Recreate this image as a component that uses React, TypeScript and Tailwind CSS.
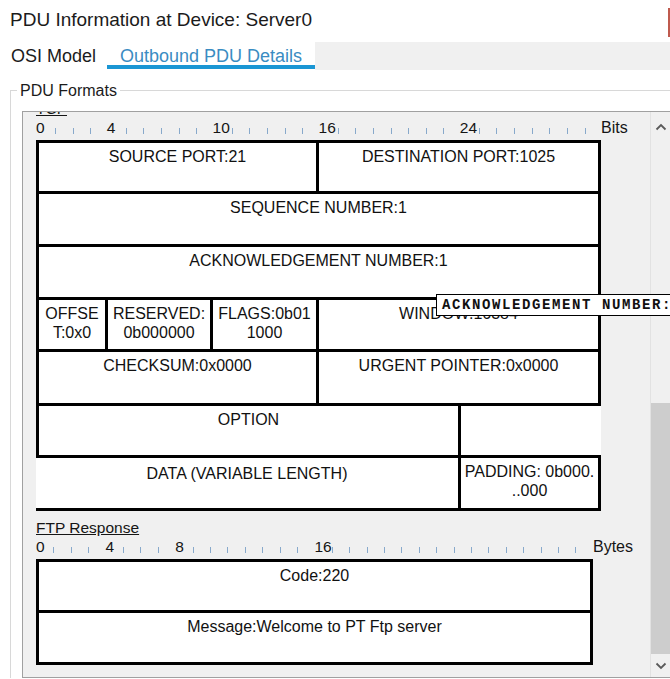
import React from "react";

type RulerProps = {
  unit: number;
  labels: number[];
  count: number;
  end: string;
  endX: number;
  tickOffset: number;
  width: number;
};

function Ruler({ unit, labels, count, end, endX, tickOffset, width }: RulerProps) {
  const ticks = Array.from({ length: count }, (_, i) => i).filter((i) => !labels.includes(i));
  return (
    <div className="relative h-[23px]" style={{ width }}>
      {labels.map((l) => (
        <span
          key={"l" + l}
          className="absolute top-[3px] text-[15.5px] leading-[16px] text-[#151515]"
          style={{ left: l * unit }}
        >
          {l}
        </span>
      ))}
      {ticks.map((t) => (
        <span
          key={"t" + t}
          className="absolute top-[11px] h-[6px] w-px bg-[#88a9cb]"
          style={{ left: t * unit + tickOffset }}
        />
      ))}
      <span
        className="absolute top-[3px] text-[16px] leading-[16px] text-[#151515]"
        style={{ left: endX }}
      >
        {end}
      </span>
    </div>
  );
}

const cell = "bg-white border-black text-center text-[16px] leading-[19px] pt-[4px] text-[#111] overflow-hidden whitespace-nowrap";

function ChevronUp() {
  return (
    <svg width="12" height="8" viewBox="0 0 12 8">
      <polyline points="1.5,6.5 6,2 10.5,6.5" fill="none" stroke="#5a5a5a" strokeWidth="1.8" />
    </svg>
  );
}

function ChevronDown() {
  return (
    <svg width="12" height="8" viewBox="0 0 12 8">
      <polyline points="1.5,1.5 6,6 10.5,1.5" fill="none" stroke="#5a5a5a" strokeWidth="1.8" />
    </svg>
  );
}

export default function App() {
  return (
    <div className="relative w-[670px] h-[679px] overflow-hidden bg-white font-['Liberation_Sans',Arial,sans-serif] text-[#111]">
      {/* title */}
      <div className="h-[42px] pl-[10px] pt-[8px] text-[19px] leading-[24px] text-[#1b1b1b]">
        PDU Information at Device: Server0
      </div>

      {/* tabs */}
      <div className="flex h-[28px]">
        <div className="flex bg-white">
          <div className="w-[107px] pl-[11px] pt-[4px] text-[18px] leading-[20px] text-[#1b1b1b]">OSI Model</div>
          <div className="w-[208px] h-[27px] border-b-[4px] border-[#1a96d4] pl-[13px] pt-[4px] text-[18px] leading-[20px] text-[#3a8cc2]">
            Outbound PDU Details
          </div>
        </div>
        <div className="flex-1 bg-[#f0f0f0]" />
      </div>

      {/* group box */}
      <div className="relative ml-[10px] mt-[20px] border-l border-t border-[#d8d8d8] pl-[11px] pt-[20px]">
        <span className="absolute left-[6px] top-[-9px] bg-white px-[3px] text-[16px] leading-[18px] text-[#1b1b1b]">
          PDU Formats
        </span>

        {/* scroll pane */}
        <div className="flex h-[567px] overflow-hidden border border-r-0 border-[#a0a0a0] bg-[#f0f0f0]">
          <div className="flex-1 overflow-hidden pl-[13px]">
            <div className="-mt-[11px] text-[15.5px] leading-[16px] underline text-[#151515]">TCP</div>
            <Ruler unit={17.66} labels={[0, 4, 10, 16, 24]} count={32} end="Bits" endX={565} tickOffset={1.3} width={565} />

            <div className="w-[565px]">
              <div className="flex h-[51px]">
                <div className={cell + " w-[280px] border-l-[3px] border-t-[3px]"}>SOURCE PORT:21</div>
                <div className={cell + " w-[285px] border-l-[3px] border-t-[3px] border-r-[3px]"}>DESTINATION PORT:1025</div>
              </div>
              <div className="flex h-[53px]">
                <div className={cell + " w-[565px] border-l-[3px] border-t-[3px] border-r-[3px]"}>SEQUENCE NUMBER:1</div>
              </div>
              <div className="flex h-[53px]">
                <div className={cell + " w-[565px] border-l-[3px] border-t-[3px] border-r-[3px]"}>ACKNOWLEDGEMENT NUMBER:1</div>
              </div>
              <div className="flex h-[52px]">
                <div className={cell + " w-[69px] border-l-[3px] border-t-[3px]"}>
                  OFFSE
                  <br />
                  T:0x0
                </div>
                <div className={cell + " w-[105px] border-l-[3px] border-t-[3px]"}>
                  RESERVED:
                  <br />
                  0b000000
                </div>
                <div className={cell + " w-[106px] border-l-[3px] border-t-[3px]"}>
                  FLAGS:0b01
                  <br />
                  1000
                </div>
                <div className={cell + " w-[285px] border-l-[3px] border-t-[3px] border-r-[3px]"}>WINDOW:16384</div>
              </div>
              <div className="flex h-[54px]">
                <div className={cell + " w-[280px] border-l-[3px] border-t-[3px]"}>CHECKSUM:0x0000</div>
                <div className={cell + " w-[285px] border-l-[3px] border-t-[3px] border-r-[3px]"}>URGENT POINTER:0x0000</div>
              </div>
              <div className="flex h-[52px]">
                <div className={cell + " w-[422px] border-l-[3px] border-t-[3px]"}>OPTION</div>
                <div className={cell + " w-[143px] border-l-[3px] border-t-[3px]"} />
              </div>
              <div className="flex h-[56px]">
                <div className={cell + " w-[422px] border-t-[3px] border-b-[3px] pt-[6px]"}>DATA (VARIABLE LENGTH)</div>
                <div className={cell + " w-[143px] border-l-[3px] border-t-[3px] border-r-[3px] border-b-[3px]"}>
                  PADDING: 0b000.
                  <br />
                  ..000
                </div>
              </div>
            </div>

            <div className="mt-[9px] w-max text-[15.5px] leading-[16px] underline text-[#151515]">FTP Response</div>
            <Ruler unit={17.4} labels={[0, 4, 8, 16]} count={32} end="Bytes" endX={557} tickOffset={0} width={557} />

            <div className="w-[557px]">
              <div className="flex h-[51px]">
                <div className={cell + " w-[557px] border-l-[3px] border-t-[3px] border-r-[3px]"}>Code:220</div>
              </div>
              <div className="flex h-[55px]">
                <div className={cell + " w-[557px] border-l-[3px] border-t-[3px] border-r-[3px] border-b-[3px]"}>
                  Message:Welcome to PT Ftp server
                </div>
              </div>
            </div>
          </div>

          {/* scrollbar */}
          <div className="flex w-[20px] flex-col border-l border-[#e2e2e2]">
            <div className="flex h-[30px] items-center justify-center">
              <ChevronUp />
            </div>
            <div className="flex flex-1 flex-col justify-end">
              <div className="h-[251px] bg-[#cdcdcd]" />
            </div>
            <div className="flex h-[23px] items-center justify-center">
              <ChevronDown />
            </div>
          </div>
        </div>
      </div>

      {/* window close button edge */}
      <div className="absolute right-0 top-[8px] h-[29px] w-[2px] bg-[#bf5a4e]" />

      {/* tooltip */}
      <div className="absolute left-[436px] top-[294px] h-[22px] whitespace-nowrap border border-black bg-white pl-[5px] pr-[4px] font-['Liberation_Mono','Courier_New',monospace] text-[14px] font-bold leading-[20px] tracking-[1.6px] text-[#111]">
        ACKNOWLEDGEMENT NUMBER:1
      </div>
    </div>
  );
}
